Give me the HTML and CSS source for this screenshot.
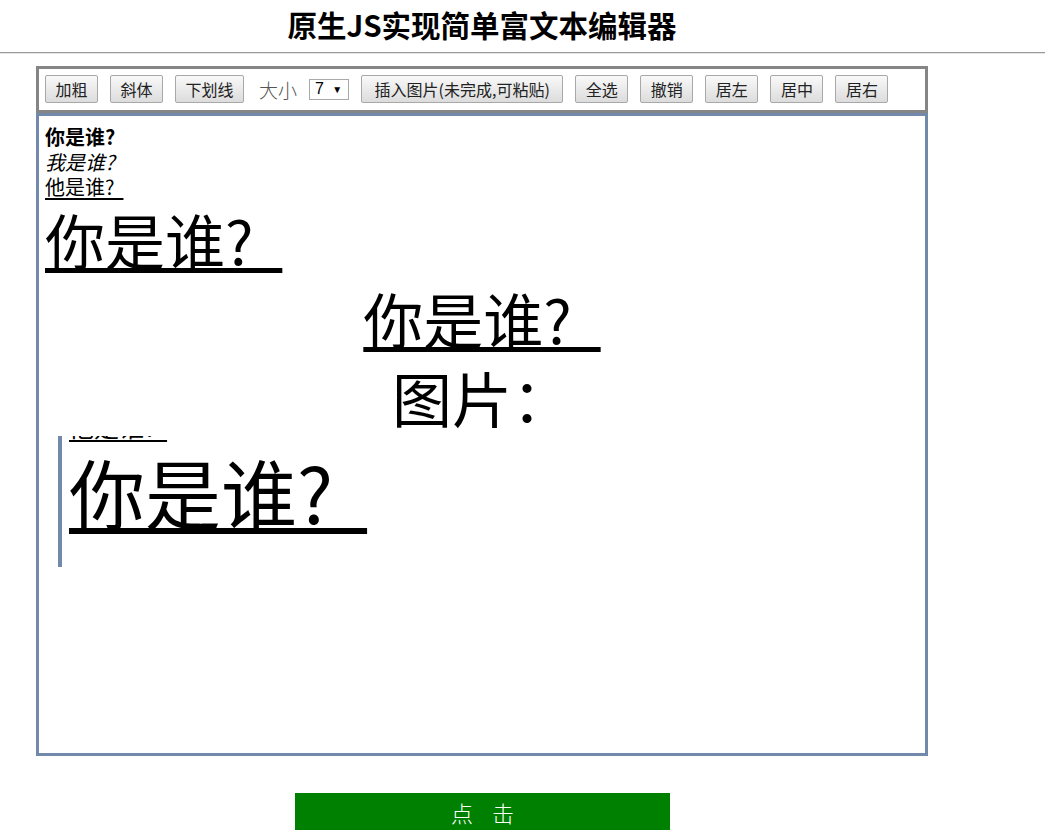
FILE: index.html
```html
<!DOCTYPE html>
<html lang="zh-CN">
<head>
<meta charset="utf-8">
<title>原生JS实现简单富文本编辑器</title>
<link rel="stylesheet" href="styles.css">
</head>
<body>
<h1 class="title">原生JS实现简单富文本编辑器</h1>
<hr class="rule">
<div class="wrap">
  <div class="toolbar">
    <button class="btn">加粗</button>
    <button class="btn">斜体</button>
    <button class="btn">下划线</button>
    <span class="label">大小</span>
    <span class="size"><span>7</span><span class="caret">▼</span></span>
    <button class="btn btn-wide">插入图片(未完成,可粘贴)</button>
    <button class="btn">全选</button>
    <button class="btn">撤销</button>
    <button class="btn">居左</button>
    <button class="btn">居中</button>
    <button class="btn">居右</button>
  </div>
  <div class="editor">
    <div class="line"><b>你是谁?</b></div>
    <div class="line"><i>我是谁?</i></div>
    <div class="line"><u class="u">他是谁?&nbsp;&nbsp;</u></div>
    <div class="big"><u class="ub">你是谁?&nbsp;&nbsp;</u></div>
    <div class="big center"><u class="ub">你是谁?&nbsp;&nbsp;</u></div>
    <div class="big center">图片：</div>
    <div class="shot">
      <div class="shot-inner">
        <div class="sline"><u class="su">他是谁?&nbsp;&nbsp;</u></div>
        <div class="sbig"><u class="sub">你是谁?&nbsp;&nbsp;</u></div>
      </div>
    </div>
  </div>
  <button class="go">点&nbsp;击</button>
</div>
</body>
</html>
```
FILE: styles.css
```css
body {
  margin: 0;
  font-family: "Noto Sans CJK SC", "Noto Sans", sans-serif;
  color: #000;
  background: #fff;
}

.title {
  width: 892px;
  margin: 0 0 0 36px;
  padding-top: 4px;
  height: 40px;
  line-height: 40px;
  font-size: 29.5px;
  font-weight: bold;
  text-align: center;
}

.rule {
  height: 0;
  border: 0;
  border-top: 1px solid #9a9a9a;
  border-bottom: 1px solid #e4e4e4;
  margin: 8px 0 12px;
}

.wrap {
  width: 892px;
  margin-left: 36px;
}

.toolbar {
  border: 3px solid #858585;
  padding: 6px 6px 7px;
  display: flex;
  align-items: center;
  gap: 12px;
}

.btn {
  font-family: "Noto Sans CJK SC", sans-serif;
  font-size: 16px;
  height: 28px;
  padding: 0 9.5px;
  border: 1px solid #a8a8a8;
  border-radius: 2px;
  background: linear-gradient(#f9f9f9, #dcdcdc);
  color: #222;
  line-height: 26px;
  white-space: nowrap;
}

.btn-wide {
  padding: 0 12.5px;
}

.label {
  font-size: 19px;
  font-weight: 300;
  color: #555;
  margin-left: 3px;
}

.size {
  box-sizing: border-box;
  width: 40px;
  height: 21px;
  border: 1px solid #a9a9a9;
  display: flex;
  align-items: center;
  justify-content: space-between;
  padding: 0 6px 0 5px;
  font-size: 16px;
  font-family: "Liberation Sans", sans-serif;
}

.caret {
  font-size: 10px;
}

.editor {
  box-sizing: border-box;
  height: 643px;
  border: 3px solid #7189ab;
  padding: 8px 6px;
  overflow: hidden;
}

.line {
  font-size: 20px;
  line-height: 25px;
}

.u {
  text-underline-offset: 3px;
}

.big {
  font-size: 60px;
  line-height: 79px;
}

.center {
  text-align: center;
}

.ub {
  text-decoration-thickness: 5px;
  text-underline-offset: 3px;
  word-spacing: 1px;
}

.shot {
  box-sizing: border-box;
  width: 320px;
  height: 131px;
  margin-left: 13px;
  border-left: 4px solid #7189ab;
  padding-left: 7px;
  overflow: hidden;
}

.shot-inner {
  margin-top: -25px;
}

.sline {
  font-size: 25px;
  line-height: 31px;
}

.su {
  text-underline-offset: 3px;
  text-decoration-thickness: 2px;
}

.sbig {
  font-size: 76px;
  line-height: 99px;
}

.sub {
  text-decoration-thickness: 6px;
  text-underline-offset: 4px;
}

.go {
  display: block;
  width: 375px;
  height: 37px;
  margin: 37px 0 0 259px;
  border: 0;
  background: #008000;
  color: #fff;
  font-family: "Noto Sans CJK SC", sans-serif;
  font-size: 22px;
  font-weight: 300;
  letter-spacing: 7px;
  text-indent: 7px;
  padding: 0;
}
```
